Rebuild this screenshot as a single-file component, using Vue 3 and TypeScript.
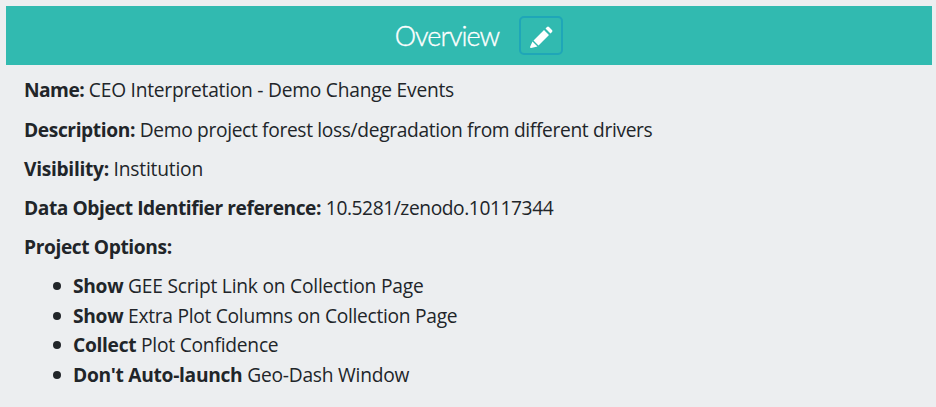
<script setup lang="ts">
interface Detail { label: string; value: string; labelTracking: number; tracking: number }
interface Option { action: string; text: string; tracking: number }

const details: Detail[] = [
  { label: 'Name:', value: 'CEO Interpretation - Demo Change Events', labelTracking: -0.55, tracking: -0.24 },
  { label: 'Description:', value: 'Demo project forest loss/degradation from different drivers', labelTracking: -0.4, tracking: -0.34 },
  { label: 'Visibility:', value: 'Institution', labelTracking: -0.3, tracking: -0.2 },
  { label: 'Data Object Identifier reference:', value: '10.5281/zenodo.10117344', labelTracking: -0.44, tracking: -0.42 },
  { label: 'Project Options:', value: '', labelTracking: -0.4, tracking: 0 },
]
const options: Option[] = [
  { action: 'Show', text: 'GEE Script Link on Collection Page', tracking: -0.22 },
  { action: 'Show', text: 'Extra Plot Columns on Collection Page', tracking: -0.28 },
  { action: 'Collect', text: 'Plot Confidence', tracking: -0.22 },
  { action: "Don't Auto-launch", text: 'Geo-Dash Window', tracking: -0.22 },
]
const spacing = (px: number) => ({ letterSpacing: `${px}px` })
</script>

<template>
  <section class="overview">
    <header class="bar">
      <h2>Overview</h2>
      <button class="edit" type="button" aria-label="Edit">
        <svg viewBox="0 0 24 24"><path fill="#fff" d="M4.500 15.500 15 5l5 5L9.500 20.500zM16.500 3.500 18 2q1-1 2 0l3 3q1 1 0 2l-1.500 1.500zM3.500 16.500l5 5L2 23q-1 0-1-1z" /></svg>
      </button>
    </header>
    <div class="body">
      <p v-for="d in details" :key="d.label">
        <b :style="spacing(d.labelTracking)">{{ d.label }}</b> <span :style="spacing(d.tracking)">{{ d.value }}</span>
      </p>
      <ul>
        <li v-for="o in options" :key="o.text">
          <b>{{ o.action }}</b> <span :style="spacing(o.tracking)">{{ o.text }}</span>
        </li>
      </ul>
    </div>
  </section>
</template>

<style>
body { background: #eceef0; }
</style>
<style scoped>
.overview { padding: 6px 4px 0 6px; font: 19.2px/29.35px "Open Sans", "Noto Sans", sans-serif; color: #212529; letter-spacing: -0.22px; }
.bar { height: 58.500px; background: #31bab0; display: flex; align-items: center; justify-content: center; gap: 20px; box-sizing: border-box; padding-left: 20px; letter-spacing: 0; }
h2 { margin: 0; padding-top: 2px; font: 300 27px/30px Lato, sans-serif; color: #fff; letter-spacing: -1px; -webkit-text-stroke: 0.35px #fff; }
.edit { width: 44px; height: 39px; padding: 3px 0 0; border: 2px solid #1fa6b8; border-radius: 5px; background: transparent; display: flex; align-items: center; justify-content: center; }
.edit svg { width: 24px; height: 24px; }
.body { padding: 10.8px 18px; }
p { margin: 0 0 9.9px; }
b { font-weight: 700; }
ul { margin: 0; padding-left: 49px; list-style: none; }
li b { letter-spacing: -0.3px; }
li::before { content: ""; display: inline-block; width: 8px; height: 8px; margin: 0 12.5px 0 -20.5px; border-radius: 50%; background: #212529; vertical-align: 3px; }
</style>
